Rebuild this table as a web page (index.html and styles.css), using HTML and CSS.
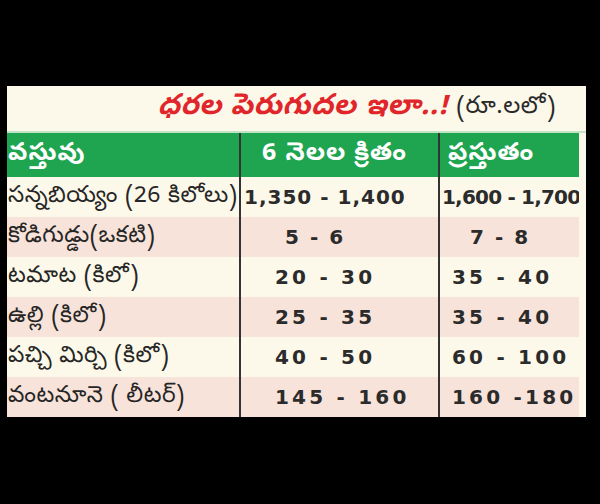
FILE: index.html
```html
<!DOCTYPE html>
<html lang="te">
<head>
<meta charset="utf-8">
<title>ధరల పెరుగుదల</title>
<link rel="stylesheet" href="styles.css">
</head>
<body>
<div class="card">
  <div class="title">
    <span class="headline">ధరల పెరుగుదల ఇలా..!</span>
    <span class="unit">(రూ.లలో)</span>
  </div>
  <div class="table">
    <div class="cell head c1">వస్తువు</div>
    <div class="cell head c2">6 నెలల క్రితం</div>
    <div class="cell head c3">ప్రస్తుతం</div>

    <div class="cell c1">సన్నబియ్యం (26 కిలోలు)</div>
    <div class="cell c2 num wide">1,350 - 1,400</div>
    <div class="cell c3 num wide">1,600 - 1,700</div>

    <div class="cell c1 pink">కోడిగుడ్డు(ఒకటి)</div>
    <div class="cell c2 num pink narrow">5 - 6</div>
    <div class="cell c3 num pink narrow">7 - 8</div>

    <div class="cell c1">టమాట (కిలో)</div>
    <div class="cell c2 num">20 - 30</div>
    <div class="cell c3 num">35 - 40</div>

    <div class="cell c1 pink">ఉల్లి (కిలో)</div>
    <div class="cell c2 num pink">25 - 35</div>
    <div class="cell c3 num pink">35 - 40</div>

    <div class="cell c1">పచ్చి మిర్చి (కిలో)</div>
    <div class="cell c2 num">40 - 50</div>
    <div class="cell c3 num">60 - 100</div>

    <div class="cell c1 pink">వంటనూనె ( లీటర్)</div>
    <div class="cell c2 num pink">145 - 160</div>
    <div class="cell c3 num pink">160 -180</div>
  </div>
</div>
</body>
</html>
```
FILE: styles.css
```css
html, body {
  margin: 0;
  padding: 0;
  background: #000;
}
body {
  padding: 86px 0 0 7px;
  font-family: "Noto Sans Telugu", "Lohit Telugu", "Pothana2000", "Gidugu", "Noto Sans", sans-serif;
  color: #262626;
}
.card {
  width: 579px;
  height: 331px;
  background: #fcf9ea;
  display: flex;
  flex-direction: column;
}
.title {
  height: 48px;
  display: flex;
  align-items: center;
  justify-content: flex-end;
  padding-right: 30px;
  gap: 8px;
  box-sizing: border-box;
  border-bottom: 2px solid #bfe3c4;
}
.headline {
  color: #e1262b;
  font-size: 29px;
  font-style: italic;
  font-weight: 700;
  letter-spacing: 0.5px;
}
.unit {
  font-size: 24px;
  color: #2a2a2a;
  letter-spacing: 0.5px;
}
.table {
  width: 572px;
  display: grid;
  grid-template-columns: 232px 199px 141px;
  grid-template-rows: 44px repeat(6, 40px);
}
.cell {
  display: flex;
  align-items: center;
  white-space: nowrap;
  overflow: hidden;
  font-size: 23px;
  letter-spacing: 0.5px;
  background: #fcf9ea;
}
.c1 {
  padding-left: 1px;
}
.c2, .c3 {
  border-left: 2px solid #333;
}
.c2 {
  padding-left: 34px;
}
.c3 {
  padding-left: 12px;
}
.head {
  background: #1fa450;
  color: #fff;
  font-weight: 700;
  font-size: 25px;
  letter-spacing: 1px;
}
.head.c2 {
  padding-left: 21px;
}
.head.c3 {
  padding-left: 8px;
}
.pink {
  background: #f8e3da;
}
.num {
  font-family: "DejaVu Sans", sans-serif;
  font-weight: 700;
  font-size: 20px;
  letter-spacing: 3.2px;
  color: #2b2b2b;
}
.c2.wide {
  padding-left: 3px;
  letter-spacing: 1px;
}
.c3.wide {
  padding-left: 2px;
  letter-spacing: -0.8px;
}
.c2.narrow {
  padding-left: 44px;
  letter-spacing: 2px;
}
.c3.narrow {
  padding-left: 30px;
  letter-spacing: 2px;
}
```
